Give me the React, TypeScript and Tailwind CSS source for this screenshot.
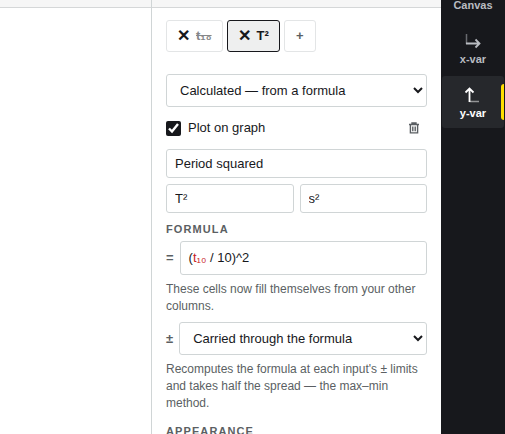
import type { ReactNode } from "react";

type Variable = {
  symbol: string;
  hidden?: boolean;
  active?: boolean;
};

const variables: Variable[] = [
  { symbol: "t₁₀", hidden: true },
  { symbol: "T²", active: true },
];

const inputClass =
  "w-full min-w-0 h-[29px] px-2 rounded-[3px] border border-[#d0d5d6] bg-white text-[13px] text-[#17181c]";

const selectClass =
  "w-full min-w-0 h-[33px] px-[9px] rounded-[3px] border border-[#d0d5d6] bg-white text-[13px] text-[#17181c]";

function XVarIcon() {
  return (
    <svg width="18" height="18" viewBox="0 0 18 18" fill="none" stroke="currentColor">
      <path d="M2.5 2v10" strokeWidth="1.5" opacity="0.5" />
      <path d="M2 11.5h13M11.5 7.5l4 4-4 4" strokeWidth="1.8" />
    </svg>
  );
}

function YVarIcon() {
  return (
    <svg width="18" height="18" viewBox="0 0 18 18" fill="none" stroke="currentColor">
      <path d="M5.5 15.5H15" strokeWidth="1.5" opacity="0.5" />
      <path d="M5.5 16V2.5M1.5 6.5l4-4 4 4" strokeWidth="1.8" />
    </svg>
  );
}

function TrashIcon() {
  return (
    <svg width="12" height="12" viewBox="0 0 12 12" fill="none" stroke="currentColor" strokeWidth="1.4">
      <path d="M1 2.5h10M4 2.2V1h4v1.2M2.4 2.8v8.1h7.2V2.8M4.8 4.5v4.8M7.2 4.5v4.8" />
    </svg>
  );
}

function NavItem({
  label,
  icon,
  active,
}: {
  label: string;
  icon?: ReactNode;
  active?: boolean;
}) {
  return (
    <button
      type="button"
      className={
        active
          ? "relative flex flex-col items-center w-full h-[52px] pt-[10px] rounded-[3px] bg-[#26282c] text-white"
          : "relative flex flex-col items-center w-full h-[52px] pt-[10px] rounded-[3px] text-[#b9bcc1]"
      }
    >
      <span className="h-[18px]">{icon}</span>
      <span className="mt-0.5 text-[11px] leading-[14px] font-bold">{label}</span>
      {active && (
        <span className="absolute right-0 top-2 bottom-2 w-[3px] rounded-l-sm bg-[#ffdd00]" />
      )}
    </button>
  );
}

function VariableTab({ symbol, hidden, active }: Variable) {
  return (
    <button
      type="button"
      className={
        active
          ? "flex items-center gap-1.5 h-8 px-2.5 rounded-[3px] border border-[#17181c] bg-[#eeefef] text-[#17181c]"
          : "flex items-center gap-1.5 h-8 px-2.5 rounded-[3px] border border-[#e3e5e6] bg-white text-[#17181c]"
      }
    >
      <span className="text-base leading-none font-bold">✕</span>
      <span
        className={
          hidden
            ? "text-[13px] font-bold line-through text-[#858789]"
            : "text-[13px] font-bold"
        }
      >
        {symbol}
      </span>
    </button>
  );
}

function SectionTitle({ children }: { children: ReactNode }) {
  return (
    <h3 className="text-[11px] leading-4 font-bold tracking-widest uppercase text-[#5b5f63]">
      {children}
    </h3>
  );
}

function VariablePanel() {
  return (
    <div className="px-[14px] pt-3">
      <div className="flex gap-1">
        {variables.map((v) => (
          <VariableTab key={v.symbol} {...v} />
        ))}
        <button
          type="button"
          aria-label="Add variable"
          className="w-8 h-8 rounded-[3px] border border-[#e3e5e6] text-[13px] font-bold text-[#5b5f63]"
        >
          +
        </button>
      </div>

      <div className="mt-[22px]">
        <select aria-label="Variable type" className={selectClass}>
          <option>Calculated — from a formula</option>
        </select>
      </div>

      <div className="flex items-center justify-between h-[42px] pr-[7px]">
        <label className="flex items-center gap-[7px] text-[13px]">
          <input type="checkbox" defaultChecked className="size-[15px] accent-[#17181c]" />
          Plot on graph
        </label>
        <button type="button" aria-label="Delete variable" className="text-[#5b5f63]">
          <TrashIcon />
        </button>
      </div>

      <div className="grid grid-cols-2 gap-1.5">
        <input aria-label="Name" defaultValue="Period squared" className={`${inputClass} col-span-2`} />
        <input aria-label="Symbol" defaultValue="T²" className={inputClass} />
        <input aria-label="Unit" defaultValue="s²" className={inputClass} />
      </div>

      <div className="mt-2">
        <SectionTitle>Formula</SectionTitle>
      </div>
      <div className="flex items-center gap-1.5 mt-1">
        <span className="text-[13px] font-bold text-[#5b5f63]">=</span>
        <div
          role="textbox"
          aria-label="Formula"
          contentEditable
          suppressContentEditableWarning
          className="flex-1 h-[34px] px-2 rounded-[3px] border border-[#d0d5d6] text-[13px] leading-8"
        >
          (<span className="text-[#c8201f]">t₁₀</span> / 10)^2
        </div>
      </div>
      <p className="mt-1.5 text-xs leading-[17px] text-[#5b5f63]">
        These cells now fill themselves from your other columns.
      </p>

      <label className="flex items-center gap-1.5 mt-[7px]">
        <span className="text-[13px] font-bold text-[#5b5f63]">±</span>
        <select aria-label="Uncertainty" className={selectClass}>
          <option>Carried through the formula</option>
        </select>
      </label>
      <p className="mt-1.5 text-xs leading-[17px] text-[#5b5f63]">
        Recomputes the formula at each input's ± limits and takes half the
        spread — the max–min method.
      </p>

      <div className="mt-[11px]">
        <SectionTitle>Appearance</SectionTitle>
      </div>
    </div>
  );
}

export default function App() {
  return (
    <div className="flex h-screen overflow-hidden bg-white font-['Liberation_Sans',Arial,sans-serif] text-[#17181c]">
      <main className="flex-1 min-w-0">
        <div className="h-2 border-b border-[#d5d7d8] bg-[#f6f6f6]" />
      </main>

      <aside className="w-[290px] shrink-0 border-l border-[#d0d5d6]">
        <div className="h-2 border-b border-[#d5d7d8] bg-[#f6f6f6]" />
        <VariablePanel />
      </aside>

      <nav className="w-16 shrink-0 px-px overflow-hidden bg-[#17181c]">
        <div className="flex flex-col gap-0.5 -mt-8">
          <NavItem label="Canvas" />
          <NavItem label="x-var" icon={<XVarIcon />} />
          <NavItem label="y-var" icon={<YVarIcon />} active />
        </div>
      </nav>
    </div>
  );
}
